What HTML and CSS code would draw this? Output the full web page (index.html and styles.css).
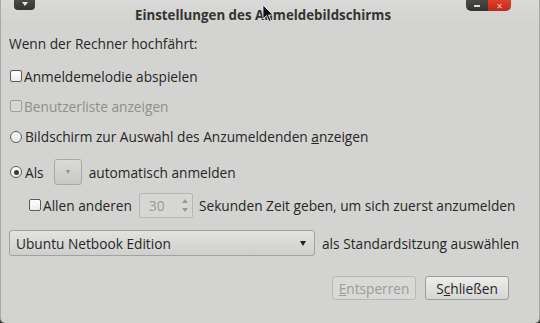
FILE: index.html
```html
<!DOCTYPE html>
<html lang="de">
<head>
    <meta charset="UTF-8">
    <title>Einstellungen des Anmeldebildschirms</title>
    <link rel="stylesheet" href="styles.css">
</head>
<body>

<div class="window">
    <div class="titlebar">
        <span class="menu-button"><span class="tri"></span></span>
        <span class="title">Einstellungen des Anmeldebildschirms</span>
        <span class="controls">
            <span class="min"></span>
            <span class="close">&#x2715;</span>
        </span>
        <svg class="cursor" width="12" height="19" viewBox="0 0 12 19">
            <path d="M1 1 L1 15 L4.5 11.5 L7 17.5 L9 16.7 L6.6 11 L11 11 Z" fill="#111" stroke="#eee" stroke-width="0.8"/>
        </svg>
    </div>

    <div class="content">
        <div class="row heading">Wenn der Rechner hochfährt:</div>

        <div class="row">
            <span class="check"></span>
            <span>Anmeldemelodie abspielen</span>
        </div>

        <div class="row disabled">
            <span class="check"></span>
            <span>Benutzerliste anzeigen</span>
        </div>

        <div class="row radio-row">
            <span class="radio"></span>
            <span>Bildschirm zur Auswahl des Anzumeldenden <u>a</u>nzeigen</span>
        </div>

        <div class="row auto-row">
            <span class="radio on"></span>
            <span>Als</span>
            <span class="small-combo"><span class="tri small"></span></span>
            <span>automatisch anmelden</span>
        </div>

        <div class="row indent">
            <span class="check"></span>
            <span>Allen anderen</span>
            <span class="spin">
                <span class="spin-value">30</span>
                <span class="spin-arrows">
                    <span class="up"></span>
                    <span class="down"></span>
                </span>
            </span>
            <span>Sekunden Zeit geben, um sich zuerst anzumelden</span>
        </div>

        <div class="row session">
            <span class="combo">
                <span>Ubuntu Netbook Edition</span>
                <span class="tri dark"></span>
            </span>
            <span>als Standardsitzung auswählen</span>
        </div>
    </div>

    <div class="actions">
        <button class="button" disabled><u>E</u>ntsperren</button>
        <button class="button">S<u>c</u>hließen</button>
    </div>
</div>

</body>
</html>
```

FILE: styles.css
```css
html
{
    font-family: "Open Sans", "DejaVu Sans", sans-serif;
    font-size: 13.7px;
    color: #262626;
}

body
{
    margin: 0;
    background: #3c3b37;
}

.window
{
    position: relative;
    box-sizing: border-box;
    width: 540px;
    height: 323px;
    background: #d3d3d1;
    border-left: 1px solid #a8a8a6;
    border-right: 1px solid #a8a8a6;
    border-radius: 0 0 5px 5px;
    display: flex;
    flex-direction: column;
}

.titlebar
{
    position: relative;
    height: 29px;
    display: flex;
    align-items: center;
    justify-content: center;
    background: linear-gradient(#d9d9d7, #d1d1cf);
}

.title
{
    font-weight: bold;
    font-size: 13.3px;
    color: #333331;
    margin: 1px 14px 0 0;
}

.menu-button
{
    position: absolute;
    top: 0;
    left: 13px;
    width: 21px;
    height: 10px;
    background: linear-gradient(#4a4945, #34332f);
    border-radius: 0 0 4px 4px;
    display: flex;
    justify-content: center;
    align-items: center;
}

.menu-button .tri
{
    border-top: 4px solid #e8e8e8;
    border-left: 3.5px solid transparent;
    border-right: 3.5px solid transparent;
    margin-top: -2px;
}

.controls
{
    position: absolute;
    top: 0;
    right: 28px;
    height: 11px;
    display: flex;
    border-radius: 0 0 5px 5px;
    overflow: hidden;
}

.controls .min
{
    width: 22px;
    background: linear-gradient(#4a4945, #34332f);
    position: relative;
}

.controls .min::after
{
    content: "";
    position: absolute;
    left: 8px;
    top: 5px;
    width: 6px;
    height: 2px;
    background: #ddd;
}

.controls .close
{
    width: 23px;
    background: linear-gradient(#e0402a, #c0281c);
    color: #f4d0c8;
    font-size: 8px;
    line-height: 11px;
    text-align: center;
    font-weight: bold;
}

.cursor
{
    position: absolute;
    left: 261px;
    top: 4px;
}

.content
{
    padding: 8px 8px 0 8px;
    flex: 1;
}

.row
{
    display: flex;
    align-items: center;
    height: 30px;
    white-space: nowrap;
}

.heading
{
    height: 12px;
    margin-bottom: 12px;
}

.row.disabled
{
    color: #8f8f8d;
}

.row.radio-row
{
    height: 31px;
}

.row.auto-row
{
    height: 40px;
}

.row.indent
{
    padding-left: 19px;
    height: 26px;
}

.check
{
    box-sizing: border-box;
    width: 12px;
    height: 12px;
    border: 1px solid #5a5a58;
    border-radius: 2px;
    background: linear-gradient(#ffffff, #ececec);
    margin: 0 2px 0 1px;
}

.disabled .check
{
    border-color: #a0a09e;
    background: #d6d6d4;
}

.radio
{
    box-sizing: border-box;
    width: 12px;
    height: 12px;
    border: 1px solid #5a5a58;
    border-radius: 50%;
    background: linear-gradient(#ffffff, #ececec);
    margin: 0 3px 0 1px;
    position: relative;
}

.radio.on::after
{
    content: "";
    position: absolute;
    left: 2.5px;
    top: 2.5px;
    width: 5px;
    height: 5px;
    border-radius: 50%;
    background: #3a3a3a;
}

.small-combo
{
    box-sizing: border-box;
    width: 28px;
    height: 26px;
    margin: 0 7px 0 10px;
    border: 1px solid #a8a8a6;
    border-radius: 3px;
    background: linear-gradient(#dadad8, #c8c8c6);
    display: flex;
    justify-content: center;
    align-items: center;
}

.tri
{
    width: 0;
    height: 0;
    border-top: 5px solid #333;
    border-left: 3.5px solid transparent;
    border-right: 3.5px solid transparent;
}

.tri.small
{
    border-top-color: #8f8f8d;
    border-top-width: 4px;
    border-left-width: 2.5px;
    border-right-width: 2.5px;
}

.spin
{
    box-sizing: border-box;
    width: 54px;
    height: 25px;
    margin: 0 6px 0 7px;
    border: 1px solid #b6b6b4;
    border-radius: 2px;
    background: #d6d6d4;
    display: flex;
    align-items: center;
    justify-content: space-between;
    padding: 0 4px 0 9px;
    color: #9a9a98;
}

.spin-arrows
{
    display: flex;
    flex-direction: column;
    gap: 5px;
}

.spin-arrows .up
{
    border-bottom: 4px solid #9a9a98;
    border-left: 3px solid transparent;
    border-right: 3px solid transparent;
}

.spin-arrows .down
{
    border-top: 4px solid #9a9a98;
    border-left: 3px solid transparent;
    border-right: 3px solid transparent;
}

.session
{
    margin-top: 12px;
    height: 26px;
}

.combo
{
    box-sizing: border-box;
    width: 306px;
    height: 26px;
    margin-right: 7px;
    padding: 0 8px 0 6px;
    border: 1px solid #a2a2a0;
    border-radius: 3px;
    background: linear-gradient(#e2e2e0, #cfcfcd);
    display: flex;
    align-items: center;
    justify-content: space-between;
}

.tri.dark
{
    border-top-color: #222;
}

.actions
{
    display: flex;
    justify-content: flex-end;
    gap: 9px;
    padding: 0 30px 23px 0;
}

.button
{
    font: inherit;
    width: 84px;
    height: 24px;
    border: 1px solid #9c9c9a;
    border-radius: 3px;
    background: linear-gradient(#ececea, #d6d6d4);
    color: #262626;
    padding: 0;
}

.button:disabled
{
    color: #9c9c9a;
    border-color: #b8b8b6;
    background: #d8d8d6;
}
```
